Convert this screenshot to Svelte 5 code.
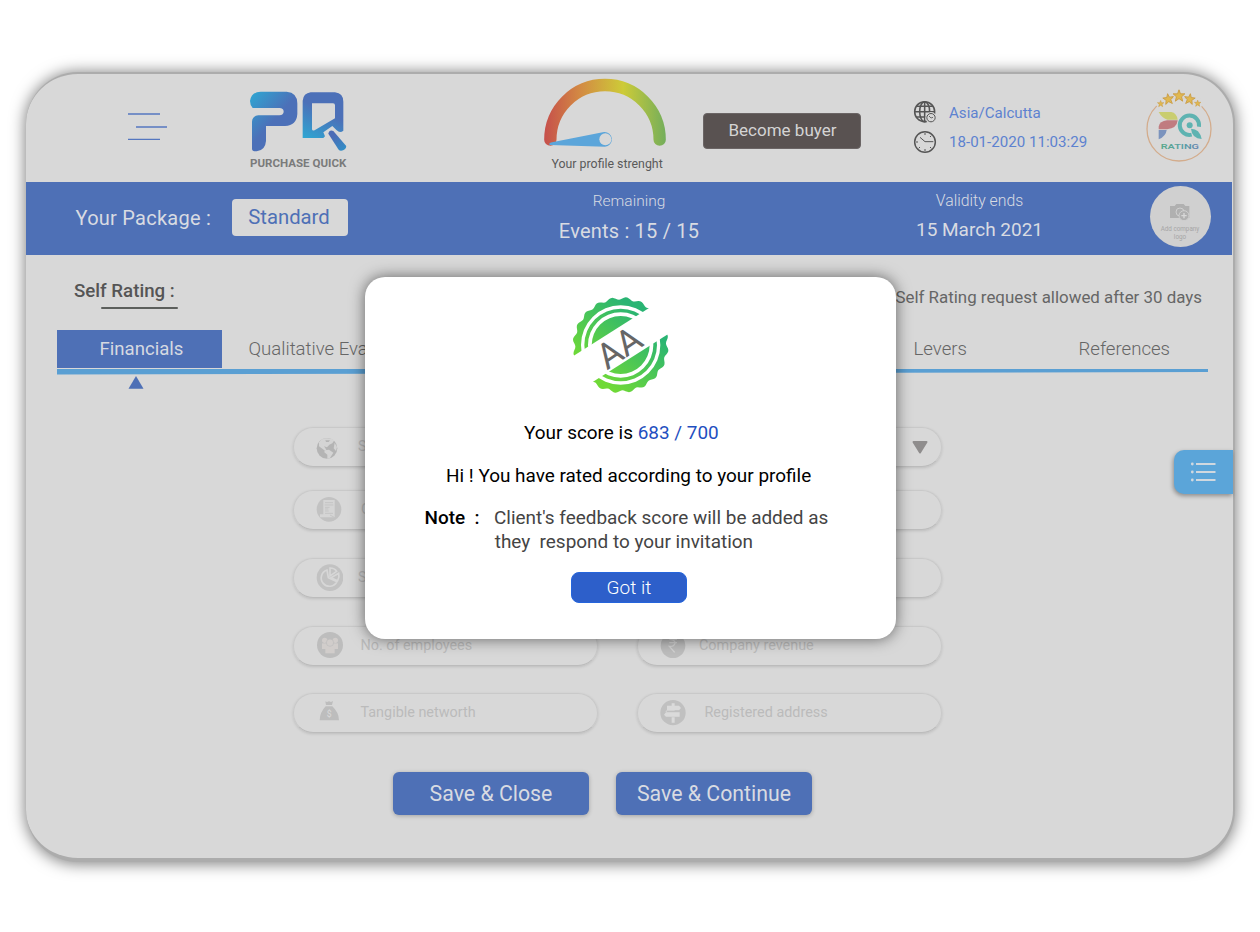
<script>
  const scallop = (() => {
    const pts = [];
    for (let i = 0; i < 360; i += 2) {
      const a = (i * Math.PI) / 180;
      const r = 140 + 4 * Math.cos(20 * (a - (7 * Math.PI) / 180));
      pts.push(`${(243 + r * Math.sin(a)).toFixed(1)} ${(181 - r * Math.cos(a)).toFixed(1)}`);
    }
    return 'M' + pts.join('L') + 'Z';
  })();
  const ring = (r) => `M${243 - r} 181a${r} ${r} 0 1 0 ${2 * r} 0a${r} ${r} 0 1 0 ${-2 * r} 0Z`;
  const seal = scallop + ring(119) + ring(109) + ring(98) + ring(87);

  const fields = [
    { icon: 'globe', label: 'Select', pad: 64 },
    { icon: 'none', label: '', pad: 64, arrow: true },
    { icon: 'doc', label: 'GST', pad: 67 },
    { icon: 'none', label: '', pad: 67 },
    { icon: 'pie', label: 'Sector', pad: 64 },
    { icon: 'none', label: '', pad: 67 },
    { icon: 'people', label: 'No. of employees', pad: 66.5, ls: -0.02 },
    { icon: 'rupee', label: 'Company revenue', pad: 61, ls: 0 },
    { icon: 'bag', label: 'Tangible networth', pad: 66.5, ls: 0 },
    { icon: 'sign', label: 'Registered address', pad: 66.5, ls: 0 }
  ];
  const star = 'M0-16 4-5 16-5 7 3 10 15 0 8-10 15-7 3-16-5-4-5Z';
</script>

<main>
  <div class="panel">
    <header>
      <svg class="menu" width="42" height="30" viewBox="0 0 42 30"><path d="M1 2h32M9 15h31M1 27.4h32" stroke="#5577c0" stroke-width="1.4" /></svg>

      <svg class="logo" width="98" height="80" viewBox="417 60 294 240">
        <defs>
          <linearGradient id="lp" gradientUnits="userSpaceOnUse" x1="420" y1="70" x2="520" y2="160"><stop stop-color="#2fa6d2" /><stop offset=".8" stop-color="#4c70b8" /></linearGradient>
          <linearGradient id="lq" gradientUnits="userSpaceOnUse" x1="585" y1="205" x2="640" y2="95"><stop stop-color="#2fa6d2" /><stop offset=".8" stop-color="#4c70b8" /></linearGradient>
          <linearGradient id="lh" gradientUnits="userSpaceOnUse" x1="700" y1="240" x2="660" y2="190"><stop stop-color="#318dc6" /><stop offset=".8" stop-color="#4c6cb6" /></linearGradient>
        </defs>
        <path fill="url(#lp)" d="M452 65H530Q562 68 562 100V132Q560 166 525 168H468V213Q466 241 440 244Q426 245 426 236V155Q427 138 445 136H508Q521 134 521 125Q521 114 508 114H428Q420 105 420 93Q424 66 452 65Z" />
        <path fill="url(#lq)" fill-rule="evenodd" d="M602 67H675Q700 70 700 95V182Q690 190 680 181L667 168 640 187 645 199 640 204H578V92Q580 70 602 67ZM606 100V178Q607 184 615 180L675 145V106Q675 100 669 100Z" />
        <path fill="url(#lh)" d="M655 191Q658 178 670 183L708 227Q711 233 701 240 691 245 686 239Z" />
        <text x="420" y="291" textLength="289" lengthAdjust="spacingAndGlyphs" font-size="35" font-weight="700" fill="#7b7b7b">PURCHASE QUICK</text>
      </svg>

      <div class="gauge">
        <svg width="124" height="70" viewBox="39 24 372 210">
          <defs><linearGradient id="g" gradientUnits="userSpaceOnUse" x1="43" y1="0" x2="407" y2="0"><stop stop-color="#c64f4b" /><stop offset=".3" stop-color="#d38b43" /><stop offset=".65" stop-color="#cdcb38" /><stop offset="1" stop-color="#74ae5b" /></linearGradient></defs>
          <path d="M61 209A164 164 0 0 1 389 209" fill="none" stroke="url(#g)" stroke-width="37" stroke-linecap="round" />
          <path d="M57 222Q60 218 66 217L222 186A22 22 0 0 1 225 230L60 225Z" fill="#5ba5da" />
          <circle cx="226" cy="208" r="18" fill="#d8d8d8" />
        </svg>
        <span>Your profile strenght</span>
      </div>

      <button class="buyer">Become buyer</button>

      <div class="times">
        <svg width="24" height="24" viewBox="39 91 72 72">
          <g fill="none" stroke="#555" stroke-width="4.6"><circle cx="74" cy="126" r="30" /><ellipse cx="74" cy="126" rx="15" ry="30" /><path d="M74 96V156M44 126H104M49 110H99M49 142H99" /></g>
          <circle cx="93" cy="144" r="17" fill="#d8d8d8" /><circle cx="93" cy="144" r="12.5" fill="none" stroke="#555" stroke-width="3" /><path d="M87 139 93 145 99 143" fill="none" stroke="#555" stroke-width="2.5" />
        </svg>
        <span class="tz">Asia/Calcutta</span>
        <svg width="24" height="24" viewBox="40 180 72 72">
          <circle cx="76" cy="216" r="31" fill="none" stroke="#555" stroke-width="4.4" />
          <path d="M61 202 76 215H101M76 189v6M76 237v6M49 216h6M57 235l4-4M95 235l-4-4M95 197l-4 4" fill="none" stroke="#555" stroke-width="3" />
        </svg>
        <span class="dt">18-01-2020 11:03:29</span>
      </div>

      <svg class="rating" width="66" height="76" viewBox="739 54 198 228">
        <circle cx="838" cy="177" r="96" fill="none" stroke="#d3ac8c" stroke-width="3.8" />
        <path d="M768 104Q838 42 910 104" fill="none" stroke="#d8d8d8" stroke-width="20" />
        <g fill="#e0b850" stroke="#c99b45" stroke-width="2.5"><path d={star} transform="translate(838 77)scale(1.1)" /><path d={star} transform="translate(806 87)scale(1)rotate(-8)" /><path d={star} transform="translate(870 87)scale(1)rotate(8)" /><path d={star} transform="translate(783 101)scale(.6)" /><path d={star} transform="translate(894 100)scale(.6)" /></g>
        <path d="M777 126H815Q831 129 834 149H803Q786 143 777 126Z" fill="#c9cd70" />
        <path d="M777 178V170Q780 153 802 151H834Q832 175 802 178Z" fill="#c07c80" />
        <path d="M777 180H801Q799 199 777 208Z" fill="#7b93bd" />
        <path d="M876 194A29 29 0 1 1 898 170" fill="none" stroke="#5eb3b1" stroke-width="12" />
        <circle cx="870" cy="166" r="9" fill="#5eb3b1" /><path d="M874 176Q900 176 906 207 877 206 874 176Z" fill="#5eb3b1" />
        <defs><linearGradient id="rt"><stop stop-color="#5ba98c" /><stop offset=".6" stop-color="#5a9fa5" /><stop offset="1" stop-color="#6280b0" /></linearGradient></defs>
        <text x="783" y="237" textLength="115" lengthAdjust="spacingAndGlyphs" font-size="19" font-weight="600" fill="url(#rt)">RATING</text>
      </svg>
    </header>

    <section class="package">
      <span class="pk">Your Package :</span>
      <span class="plan">Standard</span>
      <div class="stat s1"><small>Remaining</small><b>Events : 15 / 15</b></div>
      <div class="stat s2"><small>Validity ends</small><b>15 March 2021</b></div>
      <div class="company">
        <svg width="22" height="19" viewBox="0 0 66 57"><path d="M3 9H17L22 3H44L49 9H61V45H3Z" fill="#b0b0b0" /><circle cx="33" cy="27" r="12" fill="none" stroke="#d0d0d0" stroke-width="3" /><circle cx="45" cy="38" r="15" fill="#b0b0b0" stroke="#d0d0d0" stroke-width="3" /><path d="M45 30v16M37 38h16" stroke="#d8d8d8" stroke-width="4" /></svg>
        <span>Add company<br />logo</span>
      </div>
    </section>

    <section class="title"><h1>Self Rating :</h1><p>Self Rating request allowed after 30 days</p></section>

    <nav>
      <span class="active">Financials</span><span class="t2">Qualitative Evaluation</span><span class="t3">Levers</span><span class="t4">References</span>
    </nav>
    <div class="line"></div>
    <svg class="pointer" width="16" height="13" viewBox="0 0 16 13"><path d="M8 0 15.5 12.7H.5Z" fill="#4e70b6" /></svg>

    <div class="fields">
      {#each fields as f}
        <div class="field">
          <svg width="28" height="28" viewBox="0 0 84 84" style:margin-left={f.icon === 'rupee' || f.icon === 'sign' ? '20px' : '21px'}>
            {#if f.icon === 'globe'}
              <circle cx="36" cy="46" r="31" fill="#b4b4b4" /><path d="M12 28Q22 14 36 16L50 17 58 22 52 31 43 35 36 43 27 40 34 50 28 52 12 40ZM29 52 42 50 55 59 45 75 37 77 37 65 28 58ZM59 29 66 42 63 54 56 46Z" fill="#d4d4d4" /><path d="M31 22h14l-4 5h-8Z" fill="#b4b4b4" />
            {:else if f.icon === 'doc'}
              <circle cx="42" cy="40" r="37" fill="#c2c2c2" /><path d="M25 12H59V64H15V55H25Z" fill="#d5d5d5" /><path d="M30 20H54M29 27H55M30 34h14M30 39h10M30 45h11M30 52h24M45 57 58 64" stroke="#c2c2c2" stroke-width="2.5" />
            {:else if f.icon === 'pie'}
              <circle cx="45" cy="41" r="40" fill="#c2c2c2" /><path d="M36 18A25 25 0 1 0 66 53L40 41ZM45 12V36L65 22Q59 12 45 12ZM48 41 71 28Q74 40 68 50Z" fill="none" stroke="#d7d7d7" stroke-width="5" />
            {:else if f.icon === 'people'}
              <circle cx="45" cy="39" r="39" fill="#bdbdbd" /><g fill="#d1cdcb"><circle cx="29" cy="25" r="8" /><circle cx="61" cy="25" r="8" /><path d="M21 34H69V51H21Z" /><circle cx="45" cy="32" r="11" stroke="#bdbdbd" stroke-width="2" /><path d="M31 45H59V64H31Z" /></g>
            {:else if f.icon === 'rupee'}
              <circle cx="45" cy="41" r="37" fill="#bdbdbd" /><path d="M34 22H57M34 32H57M36 22Q53 24 51 34 48 44 34 43L50 61" fill="none" stroke="#d4d4d4" stroke-width="4" />
            {:else if f.icon === 'bag'}
              <path d="M31 7 36 9 42 7 48 9 54 6 51 18H33ZM32 22H52Q72 41 72 64H14Q14 41 32 22Z" fill="#bdbdbd" /><text x="35" y="54" font-size="26" font-weight="500" fill="#d6d6d6">$</text>
            {:else if f.icon === 'sign'}
              <circle cx="45" cy="41" r="38" fill="#c0c0c0" /><path d="M41 13H50V20H63L69 27 63 34H50V39H22L27 32V20H41ZM24 40H65V53H24L18 47ZM41 55H50V71H41Z" fill="#dadada" /><path d="M26 37H66" stroke="#c0c0c0" stroke-width="4" />
            {/if}
          </svg>
          <span style:left="{f.pad}px" style:letter-spacing="{f.ls || 0}px">{f.label}</span>
          {#if f.arrow}<svg class="arrow" width="16" height="13" viewBox="0 0 16 13"><path d="M1.5 1H14.5L8 11.5Z" fill="#8f8d8d" stroke="#8f8d8d" stroke-width="2" stroke-linejoin="round" /></svg>{/if}
        </div>
      {/each}
    </div>

    <div class="actions"><button>Save &amp; Close</button><button class="next">Save &amp; Continue</button></div>

    <button class="side" aria-label="List"><svg width="26" height="20" viewBox="0 0 26 20"><path d="M6 2H25.5M6 10H25.5M6 18H25.5" stroke="#d0d8df" stroke-width="2" /><g fill="#d0d8df"><circle cx="2.3" cy="2" r="1.4" /><circle cx="2.3" cy="10" r="1.4" /><circle cx="2.3" cy="18" r="1.4" /></g></svg></button>
  </div>

  <div class="modal" role="dialog">
    <svg class="seal" width="100" height="98" viewBox="94 34 300 294">
      <defs>
        <clipPath id="up"><path d="M80 227.3 340 62.5V0H80Z" /></clipPath>
        <clipPath id="dn"><path d="M146 300 410 132.8V340H146Z" /></clipPath>
        <linearGradient id="gu" gradientUnits="userSpaceOnUse" x1="110" y1="215" x2="240" y2="40"><stop stop-color="#6fd937" /><stop offset="1" stop-color="#29b473" /></linearGradient>
        <linearGradient id="gd" gradientUnits="userSpaceOnUse" x1="240" y1="330" x2="370" y2="160"><stop stop-color="#6fd937" /><stop offset="1" stop-color="#29b473" /></linearGradient>
      </defs>
      <path d={seal} fill-rule="evenodd" clip-path="url(#up)" fill="url(#gu)" />
      <path d={seal} fill-rule="evenodd" clip-path="url(#dn)" fill="url(#gd)" />
      <text transform="translate(259 219)rotate(-34)" text-anchor="middle" font-size="106" fill="#666">AA</text>
    </svg>
    <p class="score">Your score is <em>683 / 700</em></p>
    <p class="hi">Hi ! You have rated according to your profile</p>
    <div class="note"><b>Note&nbsp; :</b><p><span class="n1">Client's feedback score will be added as</span><br /><span class="n2">they&nbsp; respond to your invitation</span></p></div>
    <button>Got it</button>
  </div>
</main>

<style>
  :global(body) { background: #fff; overflow: hidden; }
  main { position: relative; box-sizing: border-box; width: 1260px; height: 932px; padding: 72px 0 0 26px; font-family: Roboto, sans-serif; }
  main * { box-sizing: border-box; }
  span, small, b, p, h1, button { white-space: nowrap; }
  p, h1 { margin: 0; }
  button { border: 0; padding: 0; font-family: inherit; }
  svg { display: block; flex: none; }
  .panel { position: relative; width: 1209px; height: 790px; background: #d8d8d8; border: solid #acacac; border-width: 2px 2px 4px 0; border-radius: 52px; box-shadow: 0 1px 15px 1px rgba(0, 0, 0, .5); }
  header { display: flex; align-items: flex-start; height: 108px; }
  .menu { margin: 38px 0 0 101px; }
  .logo { margin: 16px 0 0 80px; }
  .gauge { width: 124px; margin: 4px 0 0 196px; }
  .gauge span { display: block; margin: 7px 0 0 8.5px; font-size: 12.35px; line-height: 18px; color: #5a5a5a; }
  .buyer { width: 158px; height: 36px; margin: 39px 0 0 36px; padding: 0 0 2px 1px; border-radius: 4px; border: 1px solid #6b6565; background: #595251; color: #d4d4d4; font-size: 17px; }
  .times { display: grid; grid-template: 24px 24px / 24px auto; row-gap: 6px; column-gap: 12px; margin: 26px 0 0 52px; width: 181px; line-height: 25px; font-size: 15.1px; color: #5d82d0; }
  .tz { padding-top: 1px; }
  .rating { margin: 14px 0 0 52px; }
  .package { display: flex; align-items: flex-start; width: 1206px; height: 73px; background: #4e70b6; color: #d8dbe2; }
  .pk { margin: 22px 0 0 49.5px; width: 156.5px; font-size: 20px; letter-spacing: .25px; line-height: 28px; }
  .plan { width: 116px; height: 37px; margin-top: 17px; border-radius: 4px; background: #d8d8d8; color: #4e70b6; font-size: 20.3px; line-height: 37px; padding-right: 2px; text-align: center; }
  .stat { display: flex; flex-direction: column; align-items: center; padding-top: 8px; }
  .s1 { margin-left: 191px; width: 180px; }
  .s2 { margin-left: 175.5px; width: 170px; }
  .stat small { font-size: 15.5px; line-height: 22px; font-weight: 300; }
  .s2 small { font-size: 15.8px; }
  .stat b { font-size: 20px; letter-spacing: .2px; line-height: 38px; font-weight: 400; }
  .s2.stat b { font-size: 19px; letter-spacing: 0; line-height: 36px; }
  .company { display: flex; flex-direction: column; align-items: center; width: 61px; height: 61px; margin: 3.5px 0 0 85px; padding-top: 17px; border-radius: 50%; background: #d0d0d0; color: #a6a6a6; font-size: 6.3px; line-height: 8px; text-align: center; }
  .company span { margin-top: 3px; }
  .title { display: flex; justify-content: space-between; height: 75px; padding: 23px 31px 0 48px; color: #555; }
  h1 { position: relative; font-size: 18.7px; line-height: 26px; font-weight: 500; height: 32px; }
  h1::after { content: ''; position: absolute; left: 27px; width: 77px; top: 28.5px; height: 2.6px; border-radius: 2px; background: #5c5f5c; }
  .title p { font-size: 16.9px; line-height: 26px; margin-top: 6px; color: #666; }
  nav { display: grid; grid-template-columns: 191.5px 665px 165px 1fr; height: 37px; margin-left: 31px; font-size: 18.6px; line-height: 38px; font-weight: 300; color: #666; }
  .active { width: 165px; background: #4e70b6; color: #d5d9e1; text-align: center; font-weight: 400; padding-left: 4px; }
  .line { width: 1151px; height: 6px; margin: 1.5px 0 0 31px; background: #5a9fd3; clip-path: polygon(0 0, 100% 0, 100% 60%, 0 100%); }
  .pointer { margin: 1.5px 0 0 102px; }
  .fields { display: grid; grid-template-columns: 305px 305px; grid-template-rows: 63px 68px 68px 67px 40px; column-gap: 39px; margin: 38px 0 0 267px; }
  .field { position: relative; display: flex; align-items: center; height: 40px; border-radius: 20px; border: 1px solid #c9c9c9; border-bottom-color: #bcbcbc; box-shadow: 0 1px 3px rgba(0, 0, 0, .13); font-size: 14.4px; color: #bbb; }
  .field > span { position: absolute; line-height: 20px; }
  .arrow { margin: 0 13px 0 auto; }
  .actions { display: flex; gap: 27px; margin: 39px 0 0 367px; }
  .actions button { width: 196px; height: 43px; padding-bottom: 1px; border-radius: 6px; background: #4e70b6; color: #d8dbe2; font-size: 21.3px; box-shadow: 0 1px 4px rgba(0, 0, 0, .25); }
  .side { position: absolute; right: 0; top: 376px; width: 59px; height: 44px; padding-left: 16px; border-radius: 10px 0 0 10px; background: #5ba5d9; box-shadow: -1px 2px 4px rgba(0, 0, 0, .35); }
  .modal { position: absolute; left: 365px; top: 277px; width: 531px; height: 362px; border-radius: 20px; background: #fff; box-shadow: 0 0 15px rgba(0, 0, 0, .55); display: flex; flex-direction: column; color: #000; }
  .seal { margin: 19px 0 0 206px; }
  .modal > p { line-height: 24px; font-size: 18.95px; }
  .score { margin: 27px 0 0 159px; }
  .score em { font-style: normal; color: #1f4fc0; }
  .hi { margin: 19px 0 0 81px; }
  .note { display: flex; margin: 18px 0 0 59.5px; font-size: 18.95px; line-height: 24px; color: #444; }
  .note b { width: 69.5px; color: #000; font-weight: 500; }
  .n2 { margin-left: .7px; }
  .modal button { width: 116px; height: 31px; margin: 18px 0 0 206px; border-radius: 8px; border: 1px solid #2565dc; background: #2d5fca; color: #fff; font-size: 19px; font-weight: 300; }
</style>
